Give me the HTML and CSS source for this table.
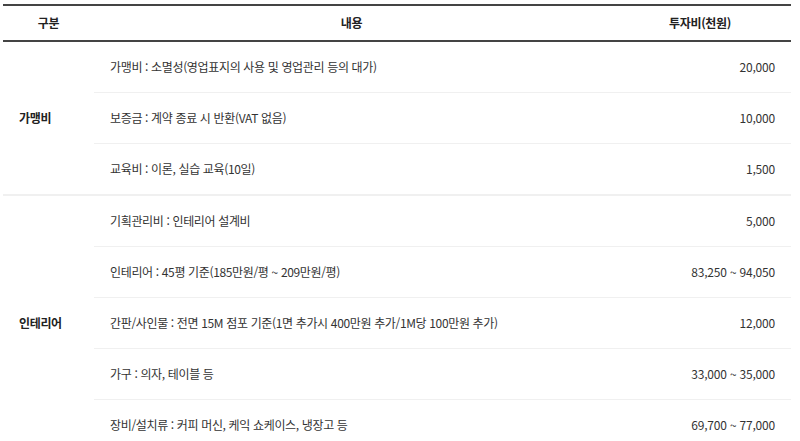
FILE: index.html
```html
<!DOCTYPE html>
<html lang="ko">
<head>
<meta charset="utf-8">
<link rel="stylesheet" href="styles.css">
</head>
<body>
<table class="cost-table">
  <thead>
    <tr>
      <th class="col-cat">구분</th>
      <th class="col-desc">내용</th>
      <th class="col-amt">투자비(천원)</th>
    </tr>
  </thead>
  <tbody class="group">
    <tr>
      <td class="cat" rowspan="3">가맹비</td>
      <td class="desc">가맹비 : 소멸성(영업표지의 사용 및 영업관리 등의 대가)</td>
      <td class="amt">20,000</td>
    </tr>
    <tr>
      <td class="desc">보증금 : 계약 종료 시 반환(VAT 없음)</td>
      <td class="amt">10,000</td>
    </tr>
    <tr class="last">
      <td class="desc">교육비 : 이론, 실습 교육(10일)</td>
      <td class="amt">1,500</td>
    </tr>
  </tbody>
  <tbody class="group">
    <tr>
      <td class="cat" rowspan="5">인테리어</td>
      <td class="desc">기획관리비 : 인테리어 설계비</td>
      <td class="amt">5,000</td>
    </tr>
    <tr>
      <td class="desc">인테리어 : 45평 기준(185만원/평 ~ 209만원/평)</td>
      <td class="amt">83,250 ~ 94,050</td>
    </tr>
    <tr>
      <td class="desc">간판/사인물 : 전면 15M 점포 기준(1면 추가시 400만원 추가/1M당 100만원 추가)</td>
      <td class="amt">12,000</td>
    </tr>
    <tr>
      <td class="desc">가구 : 의자, 테이블 등</td>
      <td class="amt">33,000 ~ 35,000</td>
    </tr>
    <tr class="last">
      <td class="desc">장비/설치류 : 커피 머신, 케익 쇼케이스, 냉장고 등</td>
      <td class="amt">69,700 ~ 77,000</td>
    </tr>
  </tbody>
</table>
</body>
</html>
```

FILE: styles.css
```css
html, body {
  margin: 0;
  padding: 0;
  background: #ffffff;
}
body {
  padding: 4px 9px 0 3px;
  font-family: "Noto Sans CJK KR", "Noto Sans", sans-serif;
  font-size: 12px;
  color: #333333;
}
.cost-table {
  width: 788px;
  border-collapse: collapse;
  border-top: 2px solid #444444;
  table-layout: fixed;
}
.cost-table th {
  height: 34px;
  padding: 0;
  font-weight: 700;
  color: #222222;
  text-align: center;
  border-bottom: 2px solid #444444;
  line-height: 1;
  letter-spacing: -0.3px;
}
.col-cat { width: 91px; }
.col-desc { width: 515px; }
.col-amt { width: 182px; }
.cost-table td {
  height: 50px;
  padding: 0 16px;
  border-bottom: 1px solid #f0f0f0;
  line-height: 1;
  vertical-align: middle;
  letter-spacing: -0.35px;
}
.cost-table td.cat {
  font-weight: 700;
  color: #222222;
  border-bottom: 2px solid #f0f0f0;
}
.cost-table tr.last td {
  border-bottom: 2px solid #f0f0f0;
}
.cost-table td.amt {
  text-align: right;
  letter-spacing: -0.2px;
}
```
